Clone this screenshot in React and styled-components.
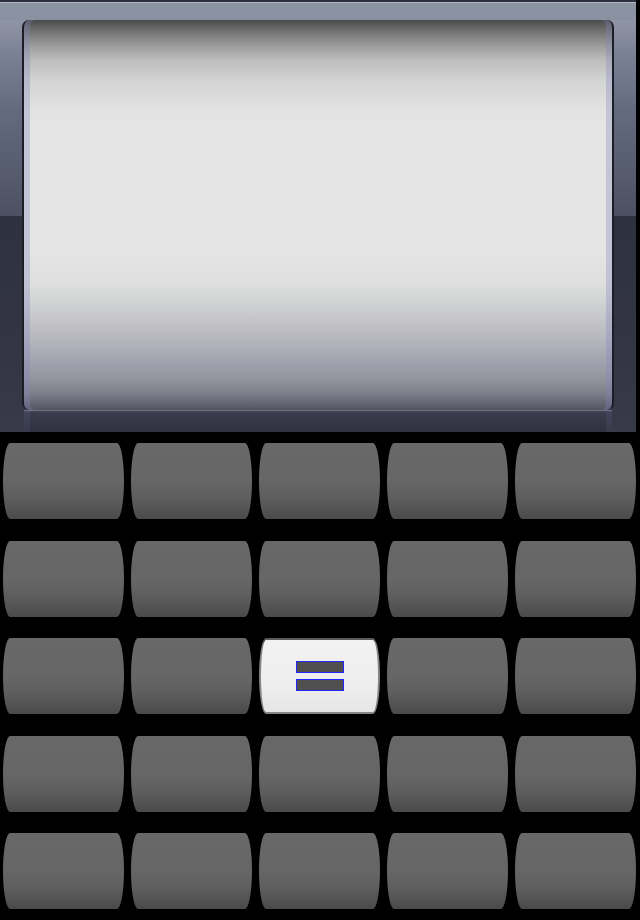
import React from "react";
import styled, { createGlobalStyle } from "styled-components";

const Global = createGlobalStyle`
  html, body { margin: 0; padding: 0; background: #000; }
  body { font-family: "Liberation Sans", Arial, sans-serif; }
`;

const Page = styled.div`
  width: 640px;
  height: 920px;
  background: #000;
  display: flex;
  flex-direction: column;
  overflow: hidden;
`;

const Bezel = styled.div`
  box-sizing: border-box;
  width: 636px;
  height: 432px;
  padding: 20px 22px 0 22px;
  display: flex;
  background:
    linear-gradient(
      to bottom,
      #2d3040 0px,
      #2d3040 2px,
      #b4b8c4 2px,
      #b4b8c4 3px,
      #8c93a3 3px,
      #8a91a1 20px,
      transparent 20px
    ),
    linear-gradient(
      to bottom,
      #9ca0b0 0%,
      #7c8296 12%,
      #646a80 25%,
      #565b6e 40%,
      #4c5062 49.9%,
      #2e3140 50%,
      #333545 80%,
      #383a4a 100%
    );
`;

const ScreenColumn = styled.div`
  flex: 1;
  display: flex;
  flex-direction: column;
`;

const Screen = styled.div`
  flex: 1;
  border-radius: 7px;
  border-left: 2px solid #1c1d26;
  border-right: 2px solid #1c1d26;
  background: linear-gradient(
    to bottom,
    #4a4a4a 0%,
    #6e6e6e 2.6%,
    #9a9a9a 6.4%,
    #bdbdbd 10.3%,
    #d2d3d3 15.4%,
    #e1e2e1 23%,
    #e4e5e4 28%,
    #e3e4e3 60%,
    #dddedd 68%,
    #cdced0 74%,
    #b6b6be 82%,
    #a4a4b0 87%,
    #94949f 92%,
    #7c7c88 96%,
    #545460 100%
  );
  box-shadow:
    inset 6px 0 0 rgba(130, 130, 190, 0.32),
    inset -6px 0 0 rgba(130, 130, 190, 0.32);
`;

const Ledge = styled.div`
  height: 22px;
  margin: 0 2px;
  background: linear-gradient(
    to bottom,
    #6c6e82 0px,
    #6c6e82 1px,
    #45475a 1px,
    #3a3c4e 3px,
    #30323f 100%
  );
  box-shadow:
    inset 6px 0 0 rgba(120, 120, 170, 0.12),
    inset -6px 0 0 rgba(120, 120, 170, 0.12);
`;

const Keypad = styled.div`
  display: grid;
  grid-template-columns: repeat(5, 121px);
  grid-auto-rows: 76px;
  column-gap: 7px;
  row-gap: 21.5px;
  padding: 11px 4px 0 3px;
`;

const Key = styled.div`
  box-sizing: border-box;
  border-radius: 7px / 38px;
  display: flex;
  flex-direction: column;
  align-items: center;
  justify-content: center;
  gap: 6px;
  background: ${(p) =>
    p.$active
      ? "linear-gradient(to bottom, #f2f2f2 0%, #eeeeee 60%, #e6e6e6 100%)"
      : "linear-gradient(to bottom, #686868 0%, #666666 50%, #606060 68%, #555555 85%, #4a4a4a 100%)"};
  border: ${(p) => (p.$active ? "2px solid #858585" : "none")};
  border-top-color: ${(p) => (p.$active ? "#5a5a5a" : "transparent")};
`;

const Bar = styled.div`
  box-sizing: border-box;
  width: 48px;
  height: 12px;
  background: #505050;
  border: 1px solid #2424ff;
`;

export default function App() {
  const keys = Array.from({ length: 25 }, (_, i) => i);
  return (
    <Page>
      <Global />
      <Bezel>
        <ScreenColumn>
          <Screen />
          <Ledge />
        </ScreenColumn>
      </Bezel>
      <Keypad>
        {keys.map((i) =>
          i === 12 ? (
            <Key key={i} $active>
              <Bar />
              <Bar />
            </Key>
          ) : (
            <Key key={i} />
          )
        )}
      </Keypad>
    </Page>
  );
}
